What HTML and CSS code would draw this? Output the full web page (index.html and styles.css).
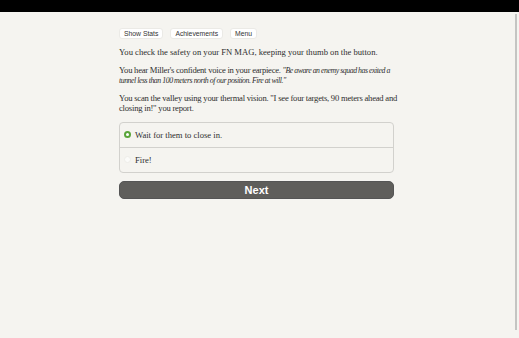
FILE: index.html
```html
<!DOCTYPE html>
<html>
<head>
<meta charset="utf-8">
<link rel="stylesheet" href="styles.css">
</head>
<body>
<div class="header"></div>
<div class="page">
  <main class="column">
    <div class="buttons">
      <button class="btn">Show Stats</button>
      <button class="btn">Achievements</button>
      <button class="btn">Menu</button>
    </div>
    <p>You check the safety on your FN MAG, keeping your thumb on the button.</p>
    <p class="tight">You hear Miller's confident voice in your earpiece. <i>"Be aware an enemy squad has exited a tunnel less than 100 meters north of our position. Fire at will."</i></p>
    <p class="snug">You scan the valley using your thermal vision. "I see four targets, 90 meters ahead and closing in!" you report.</p>
    <div class="choices">
      <label class="choice"><span class="radio on"></span>Wait for them to close in.</label>
      <label class="choice"><span class="radio"></span>Fire!</label>
    </div>
    <button class="next">Next</button>
  </main>
  <div class="scrollbar"><div class="thumb"></div></div>
</div>
</body>
</html>
```
FILE: styles.css
```css
html, body { margin: 0; padding: 0; }
body {
  background: #f5f4f0;
  width: 519px;
  height: 338px;
  overflow: hidden;
  font-family: "Liberation Serif", serif;
  color: #2e2e2e;
}
.header { height: 12px; background: #000; }
.page { display: flex; height: 326px; }
.column {
  flex: 1;
  display: flex;
  flex-direction: column;
  align-items: center;
}
.column > * { width: 275px; box-sizing: border-box; }
.buttons { display: flex; gap: 7px; margin-top: 16px; }
.btn {
  font-family: "Liberation Sans", sans-serif;
  font-size: 6.8px;
  height: 11px;
  padding: 0 4px;
  background: #fff;
  border: 1px solid #ebeae6;
  border-radius: 3px;
  color: #333;
  line-height: 9px;
}
.column > p {
  width: 287px;
  margin: 7px -12px 0 0;
  font-size: 8.6px;
  line-height: 10.5px;
}
.column > p.tight { letter-spacing: -0.25px; }
.column > p.snug { letter-spacing: -0.22px; }
p i { font-size: 7.8px; letter-spacing: -0.45px; line-height: 1; }
.column > .buttons + p { margin-top: 8px; }
.choices {
  margin-top: 8px;
  border: 1px solid #d2d1cd;
  border-radius: 4px;
}
.choice {
  display: flex;
  align-items: center;
  height: 24px;
  padding-left: 4px;
  font-size: 8.6px;
}
.choice + .choice { border-top: 1px solid #d2d1cd; }
.radio {
  width: 7px; height: 7px;
  border-radius: 50%;
  box-sizing: border-box;
  margin-right: 4px;
  border: 1px solid #eeede9;
  background: #fbfbf9;
}
.radio.on { border: 2px solid #5aa53a; background: #fff; }
.next {
  margin-top: 8px;
  height: 18px;
  background: #5f5e5b;
  color: #fff;
  border: 1px solid #555;
  border-radius: 5px;
  font-family: "Liberation Sans", sans-serif;
  font-weight: bold;
  font-size: 11px;
}
.scrollbar { width: 6px; padding-top: 2px; }
.thumb { width: 2px; margin-left: 2px; height: 316px; background: #c4c4c2; }
```
